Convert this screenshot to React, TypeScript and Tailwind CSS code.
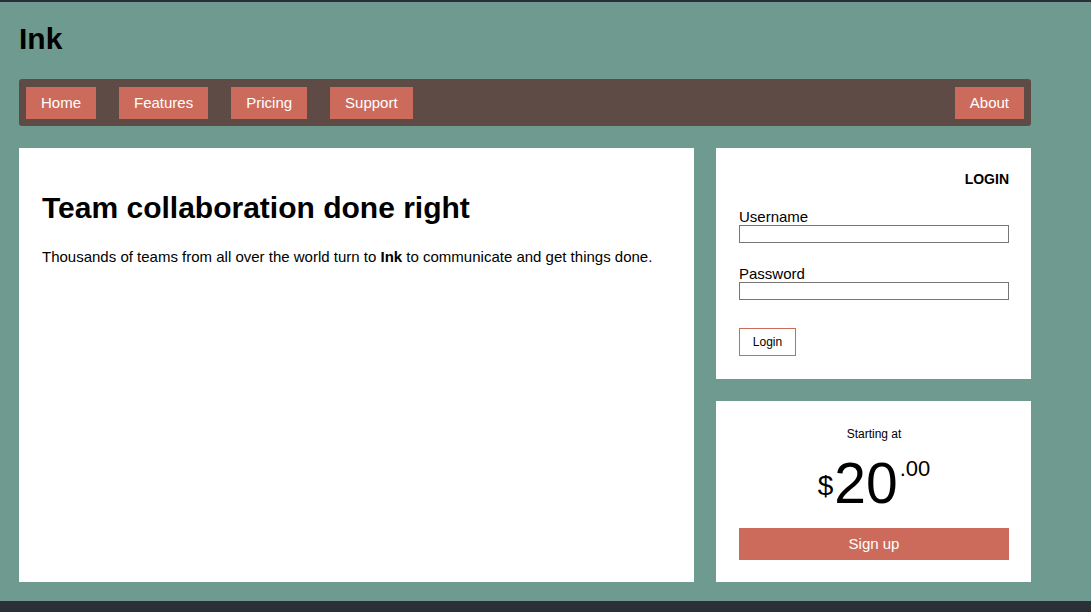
import React from 'react';

const navLinks = ['Home', 'Features', 'Pricing', 'Support'];

function NavButton({ label }: { label: string }) {
  return (
    <a
      href="#"
      className="flex h-[32px] items-center bg-[#cc6b5b] px-[15px] pt-[1px] text-[15px] text-white"
    >
      {label}
    </a>
  );
}

function LoginCard() {
  return (
    <div className="bg-white pb-[23px] pl-[23px] pr-[22px] pt-[23px]">
      <h2 className="text-right text-[14px] font-bold leading-[16px]">LOGIN</h2>
      <form className="mt-[21px]" onSubmit={(e) => e.preventDefault()}>
        <label className="block text-[15px] leading-[17px]">Username</label>
        <input
          type="text"
          className="block h-[18px] w-full border border-[#767676] bg-white"
        />
        <label className="mt-[22px] block text-[15px] leading-[17px]">Password</label>
        <input
          type="password"
          className="block h-[18px] w-full border border-[#767676] bg-white"
        />
        <button
          type="submit"
          className="mt-[28px] flex h-[28px] w-[57px] items-center justify-center border border-[#cc6b5b] bg-white text-[12px]"
        >
          Login
        </button>
      </form>
    </div>
  );
}

function PriceCard() {
  return (
    <div className="flex flex-1 flex-col bg-white pb-[22px] pl-[23px] pr-[22px] pt-[24px]">
      <p className="text-center text-[12px] leading-[18px]">Starting at</p>
      <div className="mt-[12px] flex items-start justify-center">
        <span className="mr-[1px] mt-[17px] text-[28px] leading-[28px]">$</span>
        <span className="text-[57px] leading-[57px]">20</span>
        <span className="ml-[2px] mt-[3px] text-[22px] leading-[22px]">.00</span>
      </div>
      <button
        type="button"
        className="mt-auto flex h-[32px] w-full items-center justify-center bg-[#cc6b5b] text-[15px] text-white"
      >
        Sign up
      </button>
    </div>
  );
}

export default function App() {
  return (
    <div
      className="flex h-[612px] flex-col border-t-2 border-[#2b2f38] bg-[#6f9a8f] text-black"
      style={{ fontFamily: '"Liberation Sans", Arial, sans-serif' }}
    >
      <div className="flex-1 px-[19px]">
        <div className="w-[1012px]">
          <header>
            <h1 className="pt-[20px] text-[30px] font-bold leading-[34px]">Ink</h1>
            <nav className="mt-[23px] flex h-[47px] items-center rounded-[3px] bg-[#5f4b45] px-[7px]">
              <div className="flex gap-[23px]">
                {navLinks.map((l) => (
                  <NavButton key={l} label={l} />
                ))}
              </div>
              <div className="ml-auto">
                <NavButton label="About" />
              </div>
            </nav>
          </header>

          <main className="mt-[22px] grid h-[434px] grid-cols-[675px_315px] gap-[22px]">
            <section className="bg-white p-[23px]">
              <h2 className="mt-[20px] text-[30px] font-bold leading-[34px]">
                Team collaboration done right
              </h2>
              <p className="mt-[23px] text-[15px] leading-[17px]">
                Thousands of teams from all over the world turn to <strong>Ink</strong> to
                communicate and get things done.
              </p>
            </section>
            <aside className="flex flex-col gap-[22px]">
              <LoginCard />
              <PriceCard />
            </aside>
          </main>
        </div>
      </div>
      <footer className="h-[11px] bg-[#2b2f38]" />
    </div>
  );
}
